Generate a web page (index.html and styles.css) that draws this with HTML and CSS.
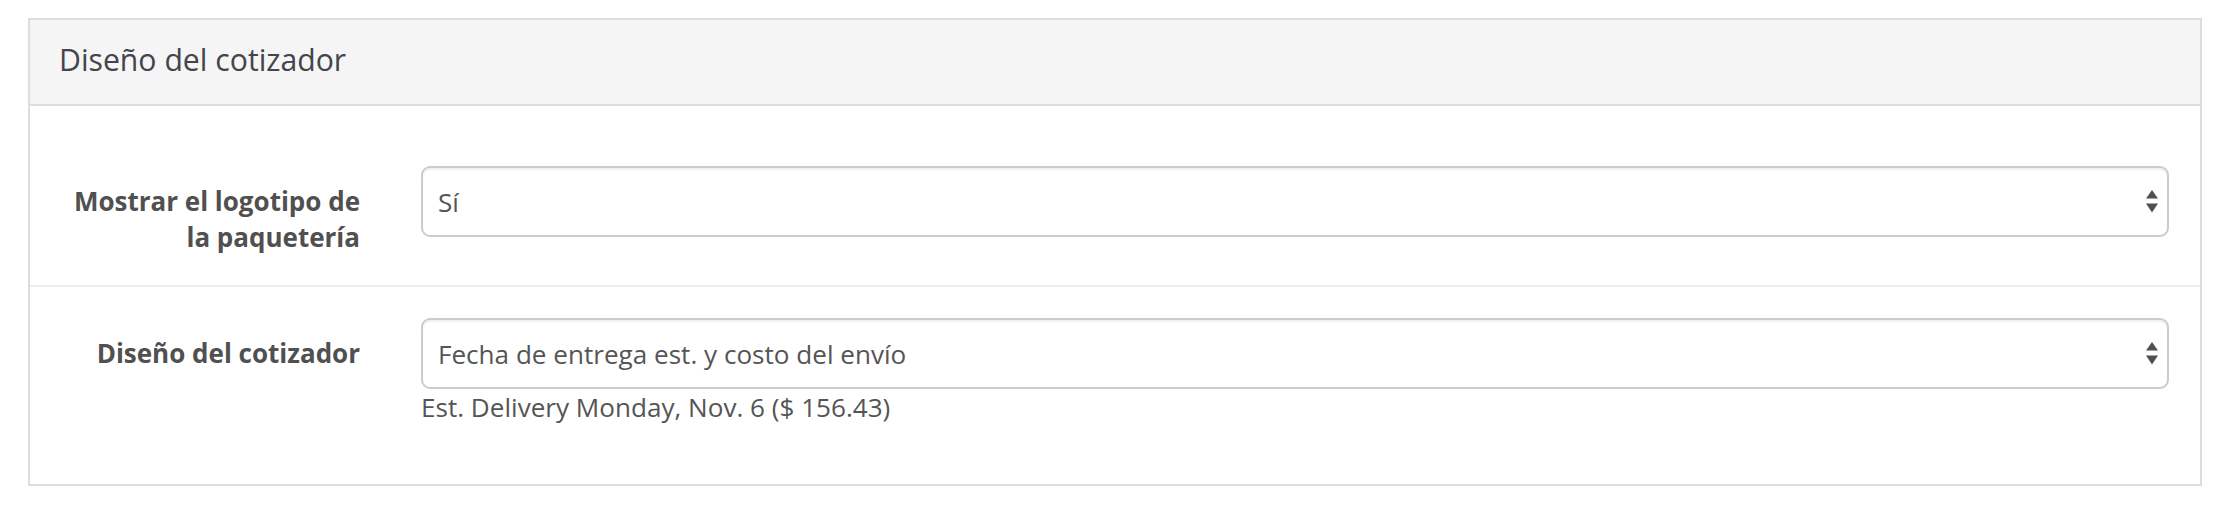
FILE: index.html
```html
<!DOCTYPE html>
<html lang="es">
<head>
<meta charset="utf-8">
<title>Diseño del cotizador</title>
<link rel="stylesheet" href="styles.css">
</head>
<body>
<div class="page">
  <section class="panel">
    <header class="panel-heading">
      <h3 class="panel-title">Diseño del cotizador</h3>
    </header>
    <div class="panel-body">
      <div class="form-row form-row-first">
        <label class="control-label">Mostrar el logotipo de la paquetería</label>
        <div class="control">
          <div class="select">
            <span class="select-value">Sí</span>
            <svg class="select-arrows" width="12" height="23" viewBox="0 0 12 23" aria-hidden="true">
              <polygon points="0,8.5 6,0 12,8.5" fill="#505050"/>
              <polygon points="0,13.5 12,13.5 6,22.5" fill="#505050"/>
            </svg>
          </div>
        </div>
      </div>
      <div class="form-row form-row-last">
        <label class="control-label">Diseño del cotizador</label>
        <div class="control">
          <div class="select">
            <span class="select-value">Fecha de entrega est. y costo del envío</span>
            <svg class="select-arrows" width="12" height="23" viewBox="0 0 12 23" aria-hidden="true">
              <polygon points="0,8.5 6,0 12,8.5" fill="#505050"/>
              <polygon points="0,13.5 12,13.5 6,22.5" fill="#505050"/>
            </svg>
          </div>
          <p class="help-block">Est. Delivery Monday, Nov. 6 ($ 156.43)</p>
        </div>
      </div>
    </div>
  </section>
</div>
</body>
</html>
```

FILE: styles.css
```css
html, body {
  margin: 0;
  padding: 0;
  background: #ffffff;
}

body {
  font-family: "Open Sans", "Noto Sans", "Liberation Sans", sans-serif;
  color: #555555;
}

.page {
  padding: 18px 28px;
}

.panel {
  border: 2px solid #dddddd;
  background: #ffffff;
}

.panel-heading {
  background: #f5f5f5;
  border-bottom: 2px solid #dddddd;
  padding: 22px 29px 26px;
}

.panel-title {
  margin: 0;
  font-size: 30.2px;
  line-height: 36px;
  font-weight: 400;
  color: #44444c;
}

.form-row {
  display: grid;
  grid-template-columns: 300px 1fr;
  column-gap: 61px;
  padding-left: 30px;
  padding-right: 31px;
}

.form-row-first {
  padding-top: 60px;
  padding-bottom: 30px;
  border-bottom: 2px solid #eeeeee;
}

.form-row-last {
  padding-top: 31px;
  padding-bottom: 59px;
}

.control-label {
  padding-top: 17px;
  font-size: 26px;
  line-height: 36px;
  font-weight: 700;
  color: #505050;
  text-align: right;
}

.select {
  display: flex;
  align-items: center;
  justify-content: space-between;
  height: 71px;
  box-sizing: border-box;
  border: 2px solid #cccccc;
  border-radius: 9px;
  box-shadow: inset 0 2px 2px rgba(0, 0, 0, 0.06);
  padding: 0 9px 0 15px;
  background: #ffffff;
}

.select-value {
  font-size: 26.1px;
  color: #555555;
}

.select-arrows {
  flex: none;
}

.help-block {
  margin: 0;
  font-size: 26.1px;
  line-height: 36px;
  color: #555555;
}
```
